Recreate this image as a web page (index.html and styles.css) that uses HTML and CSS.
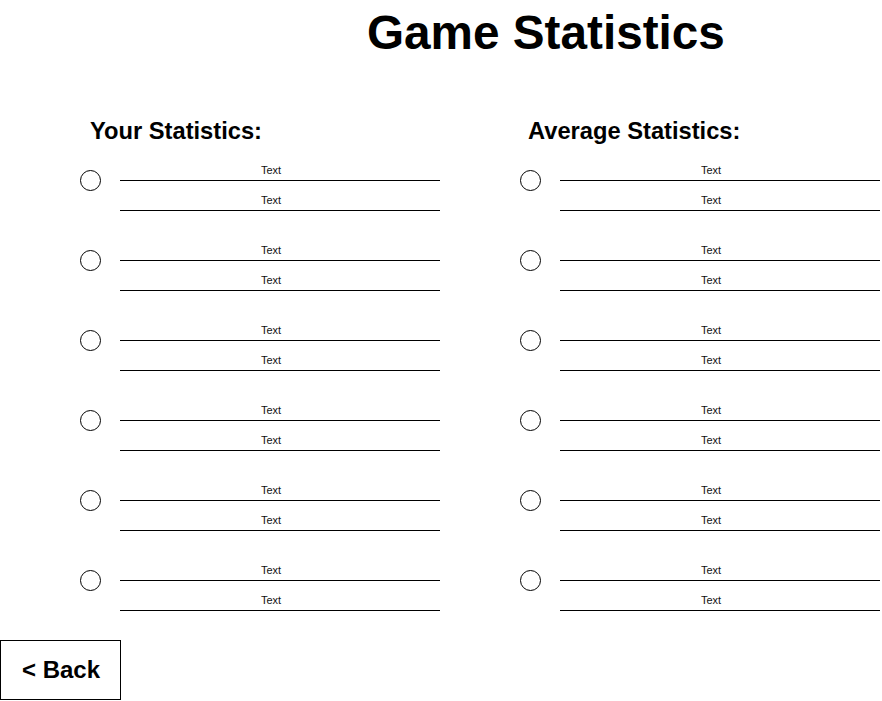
FILE: index.html
```html
<!DOCTYPE html>
<html lang="en">
<head>
<meta charset="utf-8">
<title>Game Statistics</title>
<link rel="stylesheet" href="styles.css">
</head>
<body>
<h1 class="title">Game Statistics</h1>
<main class="columns">
  <section class="col">
    <h2 class="col-head col-head--left">Your Statistics:</h2>
    <div class="row"><span class="dot"></span><div class="cells"><div class="cell">Text</div><div class="cell">Text</div></div></div>
    <div class="row"><span class="dot"></span><div class="cells"><div class="cell">Text</div><div class="cell">Text</div></div></div>
    <div class="row"><span class="dot"></span><div class="cells"><div class="cell">Text</div><div class="cell">Text</div></div></div>
    <div class="row"><span class="dot"></span><div class="cells"><div class="cell">Text</div><div class="cell">Text</div></div></div>
    <div class="row"><span class="dot"></span><div class="cells"><div class="cell">Text</div><div class="cell">Text</div></div></div>
    <div class="row"><span class="dot"></span><div class="cells"><div class="cell">Text</div><div class="cell">Text</div></div></div>
  </section>
  <section class="col">
    <h2 class="col-head col-head--right">Average Statistics:</h2>
    <div class="row"><span class="dot"></span><div class="cells"><div class="cell">Text</div><div class="cell">Text</div></div></div>
    <div class="row"><span class="dot"></span><div class="cells"><div class="cell">Text</div><div class="cell">Text</div></div></div>
    <div class="row"><span class="dot"></span><div class="cells"><div class="cell">Text</div><div class="cell">Text</div></div></div>
    <div class="row"><span class="dot"></span><div class="cells"><div class="cell">Text</div><div class="cell">Text</div></div></div>
    <div class="row"><span class="dot"></span><div class="cells"><div class="cell">Text</div><div class="cell">Text</div></div></div>
    <div class="row"><span class="dot"></span><div class="cells"><div class="cell">Text</div><div class="cell">Text</div></div></div>
  </section>
</main>
<button class="back" type="button">&lt; Back</button>
</body>
</html>
```

FILE: styles.css
```css
* { box-sizing: border-box; }

html, body {
  margin: 0;
  padding: 0;
  background: #fff;
  color: #000;
  font-family: "Liberation Sans", Arial, sans-serif;
}

body {
  width: 882px;
  height: 701px;
  overflow: hidden;
}

.title {
  margin: 5px 0 0 0;
  padding-left: 367px;
  font-size: 47.7px;
  line-height: 55px;
  font-weight: bold;
}

.columns {
  display: grid;
  grid-template-columns: 360px 360px;
  column-gap: 80px;
  padding-left: 80px;
  margin-top: 57px;
}

.col {
  display: flex;
  flex-direction: column;
  row-gap: 20px;
}

.col-head {
  margin: 0 0 -14px 0;
  font-size: 23.7px;
  line-height: 28px;
  font-weight: bold;
  white-space: nowrap;
}

.col-head--left { padding-left: 10px; }
.col-head--right { padding-left: 8px; }

.row {
  display: flex;
  align-items: flex-start;
}

.dot {
  width: 21px;
  height: 21px;
  margin-top: 19px;
  border: 1px solid #000;
  border-radius: 50%;
  flex: none;
}

.cells {
  margin-left: 19px;
  width: 320px;
}

.cell {
  height: 30px;
  padding-top: 13px;
  padding-right: 18px;
  border-bottom: 1px solid #000;
  font-size: 11px;
  line-height: 13px;
  text-align: center;
  color: #111;
}

.back {
  display: block;
  margin-top: 29px;
  width: 121px;
  height: 60px;
  padding: 0 0 0 1px;
  background: #fff;
  border: 1px solid #000;
  font-family: "Liberation Sans", Arial, sans-serif;
  font-size: 24px;
  line-height: 28px;
  font-weight: bold;
  color: #000;
  text-align: center;
}
```
